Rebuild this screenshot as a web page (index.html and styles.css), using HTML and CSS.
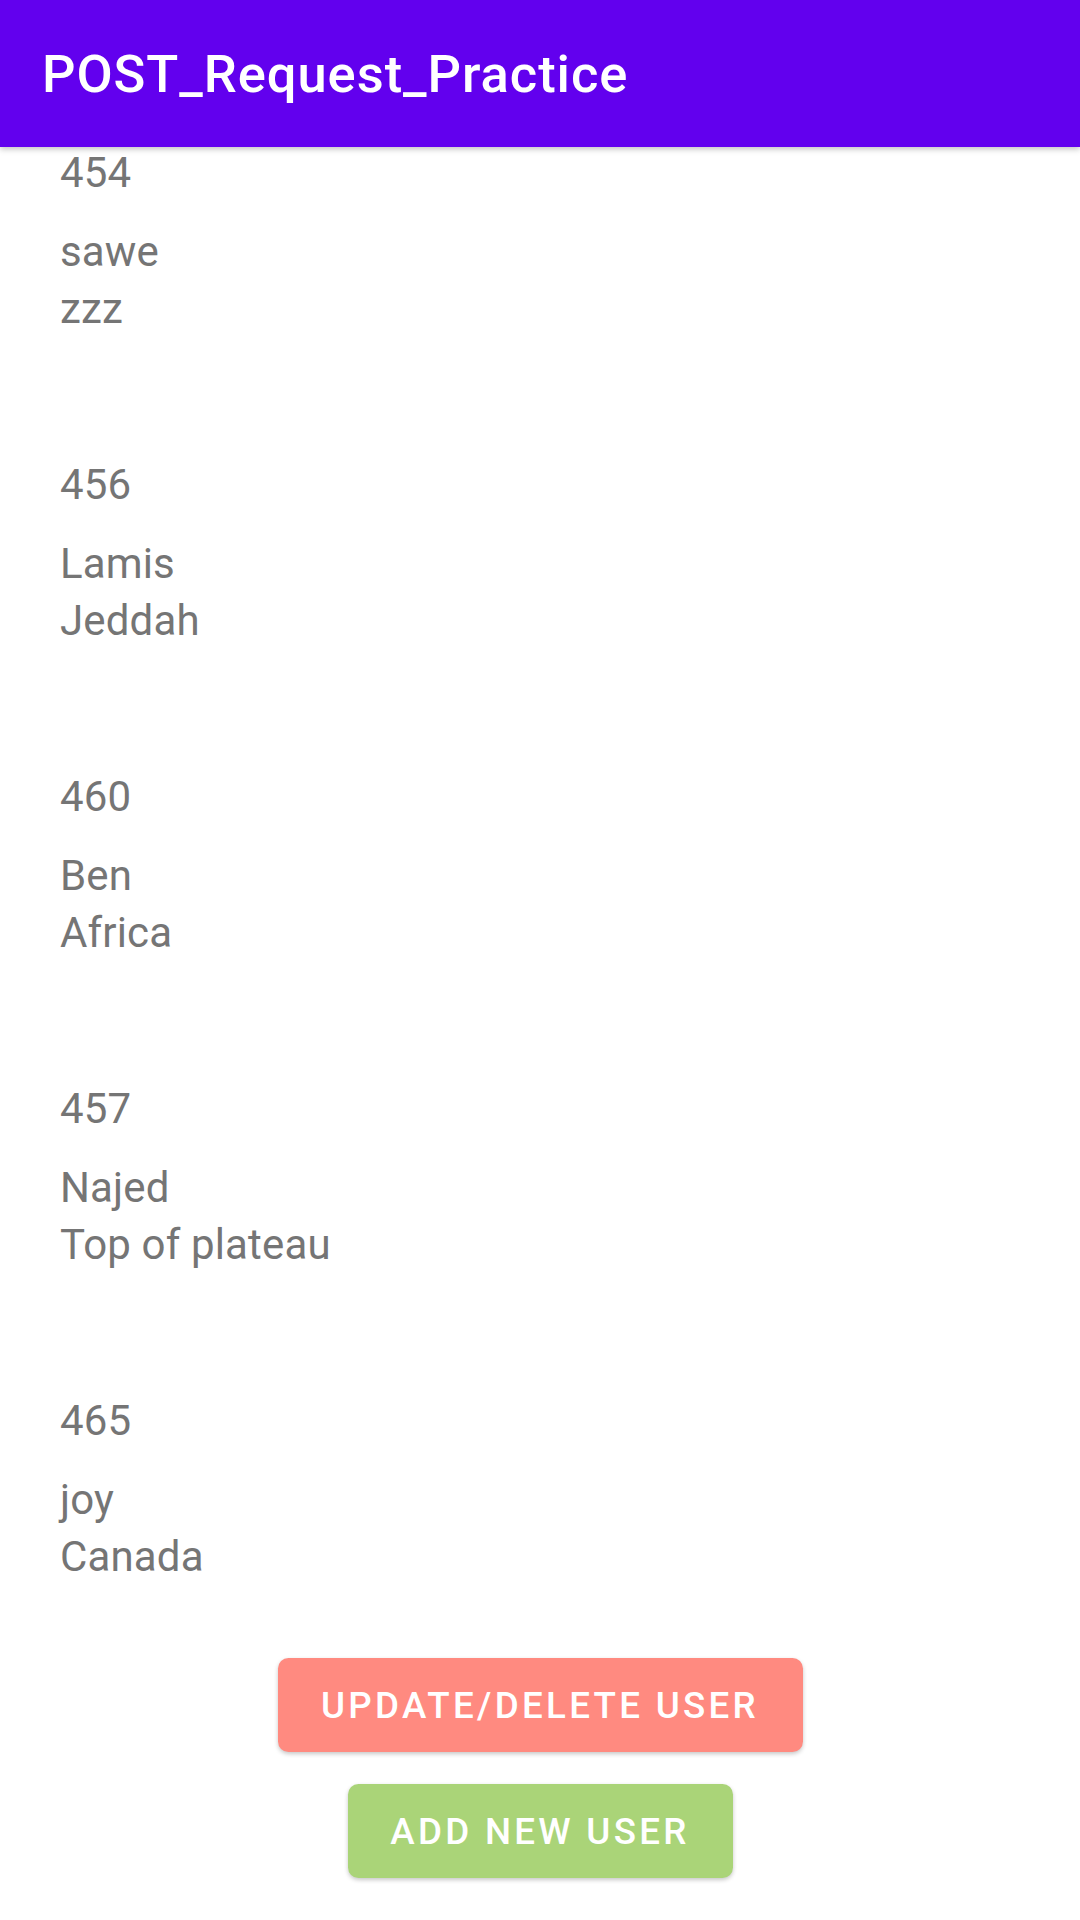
FILE: index.html
```html
<!DOCTYPE html>
<html>
<head>
<meta charset="utf-8">
<link rel="stylesheet" href="styles.css">
</head>
<body>
<div class="screen">
  <header class="appbar">
    <h1 class="title">POST_Request_Practice</h1>
  </header>
  <main class="list">
    <div class="item first">
      <div class="id">454</div>
      <div class="name">sawe</div>
      <div class="loc">zzz</div>
    </div>
    <div class="item">
      <div class="id">456</div>
      <div class="name">Lamis</div>
      <div class="loc">Jeddah</div>
    </div>
    <div class="item">
      <div class="id">460</div>
      <div class="name">Ben</div>
      <div class="loc">Africa</div>
    </div>
    <div class="item">
      <div class="id">457</div>
      <div class="name">Najed</div>
      <div class="loc">Top of plateau</div>
    </div>
    <div class="item">
      <div class="id">465</div>
      <div class="name">joy</div>
      <div class="loc">Canada</div>
    </div>
  </main>
  <div class="actions">
    <button class="btn btn-update">UPDATE/DELETE USER</button>
    <button class="btn btn-add">ADD NEW USER</button>
  </div>
</div>
</body>
</html>
```

FILE: styles.css
```css
html, body {
  margin: 0;
  padding: 0;
  background: #ffffff;
}

.screen {
  width: 1080px;
  height: 1920px;
  overflow: hidden;
  position: relative;
  font-family: Roboto, "Noto Sans", sans-serif;
  display: flex;
  flex-direction: column;
}

.appbar {
  height: 147px;
  flex: 0 0 147px;
  background: #6200ee;
  display: flex;
  align-items: center;
  padding-left: 42px;
  box-shadow: 0 2px 6px rgba(0, 0, 0, 0.25);
  position: relative;
  z-index: 2;
}

.title {
  margin: 0;
  color: #ffffff;
  font-size: 52.5px;
  font-weight: 500;
  letter-spacing: 0.95px;
}

.list {
  flex: 0 0 auto;
  padding-left: 60px;
  margin-top: -2px;
  height: 1497px;
  overflow: hidden;
}

.item {
  height: 312px;
  color: #757575;
  font-size: 42px;
  line-height: 56px;
  letter-spacing: 0.15px;
}

.id {
  margin-bottom: 22px;
}

.name,
.loc {
  line-height: 57px;
}

.actions {
  display: flex;
  flex-direction: column;
  align-items: center;
}

.btn {
  font-family: Roboto, "Noto Sans", sans-serif;
  font-size: 36.75px;
  font-weight: 500;
  letter-spacing: 3.28px;
  color: #ffffff;
  border: none;
  border-radius: 10.5px;
  height: 94px;
  padding: 0 42px;
  margin: 16px 0;
  box-shadow: 0 2px 4px rgba(0, 0, 0, 0.22);
}

.btn-update {
  background: #ff8a80;
  width: 525px;
}

.btn-add {
  background: #aad478;
  width: 385px;
}
```
